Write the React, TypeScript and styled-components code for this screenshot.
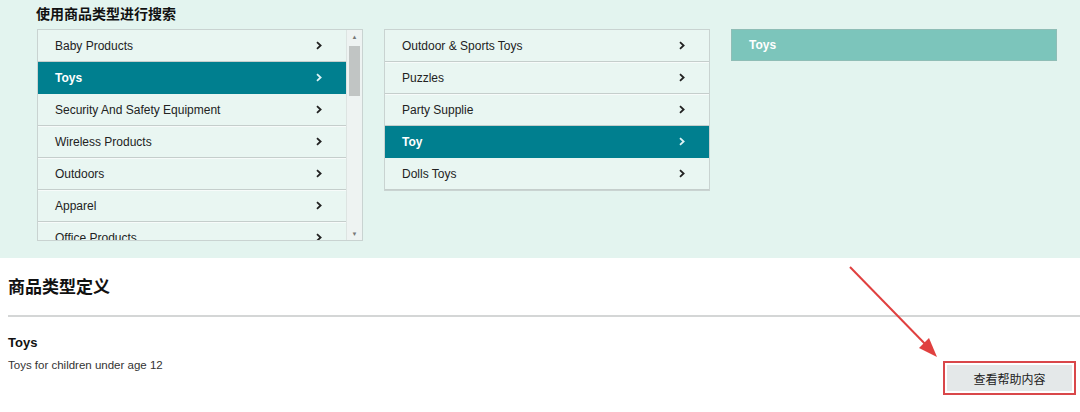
import React from "react";
import styled, { createGlobalStyle } from "styled-components";

const GlobalStyle = createGlobalStyle`
  html, body {
    margin: 0;
    padding: 0;
    background: #ffffff;
    font-family: "Liberation Sans", Arial, "Noto Sans CJK SC", sans-serif;
  }
`;

const Page = styled.div`
  position: relative;
  width: 1080px;
  height: 412px;
  overflow: hidden;
  background: #ffffff;
`;

const SearchPanel = styled.div`
  height: 258px;
  background: #e3f4ef;
  padding: 3px 0 0 36px;
  box-sizing: border-box;
`;

const PanelTitle = styled.div`
  font-family: "Noto Sans CJK SC", sans-serif;
  font-size: 14px;
  font-weight: 700;
  color: #111111;
  line-height: 20px;
  height: 26px;
`;

const Columns = styled.div`
  display: flex;
  align-items: flex-start;
  gap: 21px;
  padding-left: 1px;
`;

const ListBox = styled.div<{ $height: number }>`
  display: flex;
  width: 326px;
  height: ${(p) => p.$height}px;
  border: 1px solid #c9d3d1;
  box-sizing: border-box;
  background: #e9f6f2;
  overflow: hidden;
`;

const Rows = styled.div`
  flex: 1;
  display: flex;
  flex-direction: column;
`;

const Row = styled.div<{ $active?: boolean }>`
  flex: none;
  height: 32px;
  display: flex;
  align-items: center;
  justify-content: space-between;
  padding: 0 23px 0 17px;
  box-sizing: border-box;
  font-size: 12px;
  color: ${(p) => (p.$active ? "#ffffff" : "#222222")};
  font-weight: ${(p) => (p.$active ? 700 : 400)};
  background: ${(p) => (p.$active ? "#007f8f" : "transparent")};
  border-bottom: 1px solid ${(p) => (p.$active ? "#007f8f" : "#c5cecc")};
  box-shadow: ${(p) => (p.$active ? "none" : "0 1px 0 #f7fbfa")};
`;

const Chevron = styled.span<{ $active?: boolean }>`
  display: flex;
  color: ${(p) => (p.$active ? "#dff3f5" : "#222222")};
`;

const Scrollbar = styled.div`
  width: 15px;
  flex: none;
  display: flex;
  flex-direction: column;
  align-items: center;
  background: #eef3f2;
  border-left: 1px solid #dde4e2;
`;

const ScrollArrow = styled.div`
  height: 13px;
  width: 100%;
  display: flex;
  align-items: center;
  justify-content: center;
  font-size: 6px;
  color: #777777;
`;

const ScrollTrack = styled.div`
  flex: 1;
  width: 100%;
  display: flex;
  flex-direction: column;
  align-items: center;
`;

const ScrollThumb = styled.div`
  width: 11px;
  height: 50px;
  background: #c1c5c4;
  margin-top: 3px;
`;

const PickedBox = styled.div`
  width: 326px;
  height: 32px;
  display: flex;
  align-items: center;
  padding-left: 17px;
  box-sizing: border-box;
  background: #7cc5bb;
  border: 1px solid #8fbdb6;
  color: #ffffff;
  font-weight: 700;
  font-size: 12px;
`;

const Definition = styled.div`
  padding: 0 0 0 8px;
`;

const DefTitle = styled.div`
  font-family: "Noto Sans CJK SC", sans-serif;
  font-size: 17px;
  font-weight: 700;
  color: #111111;
  line-height: 24px;
  padding-top: 16px;
  height: 42px;
  box-sizing: border-box;
`;

const Divider = styled.div`
  height: 2px;
  background: #d4d6d6;
  margin-top: 15px;
`;

const DefBody = styled.div`
  display: flex;
  justify-content: space-between;
  align-items: flex-start;
  padding: 18px 4px 0 0;
`;

const DefText = styled.div`
  display: flex;
  flex-direction: column;
  gap: 7px;
`;

const TypeName = styled.div`
  font-size: 13px;
  font-weight: 700;
  color: #111111;
  line-height: 16px;
`;

const TypeDesc = styled.div`
  font-size: 11.5px;
  color: #333333;
  line-height: 14px;
`;

const Highlight = styled.div`
  margin-top: 26px;
  border: 2px solid #d9474a;
  padding: 2px;
  width: 133px;
  height: 34px;
  box-sizing: border-box;
`;

const HelpButton = styled.div`
  height: 100%;
  display: flex;
  align-items: center;
  justify-content: center;
  background: #e4e8e9;
  font-family: "Noto Sans CJK SC", sans-serif;
  font-size: 12px;
  color: #222222;
`;

const Arrow = styled.svg`
  position: absolute;
  left: 845px;
  top: 262px;
`;

const ChevronIcon = () => (
  <svg width="8" height="9" viewBox="0 0 8 9">
    <path d="M2 1.2 L5.6 4.5 L2 7.8" fill="none" stroke="currentColor" strokeWidth="1.8" />
  </svg>
);

const firstList = [
  "Baby Products",
  "Toys",
  "Security And Safety Equipment",
  "Wireless Products",
  "Outdoors",
  "Apparel",
  "Office Products",
];

const secondList = ["Outdoor & Sports Toys", "Puzzles", "Party Supplie", "Toy", "Dolls Toys"];

export default function App() {
  return (
    <Page>
      <GlobalStyle />
      <SearchPanel>
        <PanelTitle>使用商品类型进行搜索</PanelTitle>
        <Columns>
          <ListBox $height={212}>
            <Rows>
              {firstList.map((name) => (
                <Row key={name} $active={name === "Toys"}>
                  {name}
                  <Chevron $active={name === "Toys"}>
                    <ChevronIcon />
                  </Chevron>
                </Row>
              ))}
            </Rows>
            <Scrollbar>
              <ScrollArrow>▲</ScrollArrow>
              <ScrollTrack>
                <ScrollThumb />
              </ScrollTrack>
              <ScrollArrow>▼</ScrollArrow>
            </Scrollbar>
          </ListBox>
          <ListBox $height={162}>
            <Rows>
              {secondList.map((name) => (
                <Row key={name} $active={name === "Toy"}>
                  {name}
                  <Chevron $active={name === "Toy"}>
                    <ChevronIcon />
                  </Chevron>
                </Row>
              ))}
            </Rows>
          </ListBox>
          <PickedBox>Toys</PickedBox>
        </Columns>
      </SearchPanel>
      <Definition>
        <DefTitle>商品类型定义</DefTitle>
        <Divider />
        <DefBody>
          <DefText>
            <TypeName>Toys</TypeName>
            <TypeDesc>Toys for children under age 12</TypeDesc>
          </DefText>
          <Highlight>
            <HelpButton>查看帮助内容</HelpButton>
          </Highlight>
        </DefBody>
      </Definition>
      <Arrow width="100" height="100" viewBox="0 0 100 100">
        <line x1="5" y1="5" x2="84" y2="86" stroke="#e0403f" strokeWidth="2" />
        <polygon points="92,95 74,86 84,76" fill="#e0403f" />
      </Arrow>
    </Page>
  );
}
